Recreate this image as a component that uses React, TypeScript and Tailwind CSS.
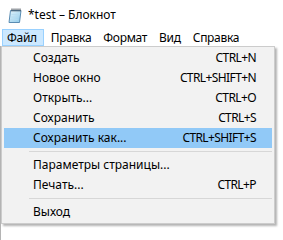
import React from 'react'

const font = { fontFamily: '"Noto Sans", "Open Sans", sans-serif' }

type Item = { label: string; keys?: string; active?: boolean } | 'sep'

const items: Item[] = [
  { label: 'Создать', keys: 'CTRL+N' },
  { label: 'Новое окно', keys: 'CTRL+SHIFT+N' },
  { label: 'Открыть...', keys: 'CTRL+O' },
  { label: 'Сохранить', keys: 'CTRL+S' },
  { label: 'Сохранить как...', keys: 'CTRL+SHIFT+S', active: true },
  'sep',
  { label: 'Параметры страницы...' },
  { label: 'Печать...', keys: 'CTRL+P' },
  'sep',
  { label: 'Выход' },
]

function NotepadIcon() {
  return (
    <svg width="16" height="16" viewBox="0 0 16 16">
      <defs>
        <linearGradient id="pg" x1="0" y1="0" x2="1" y2="1">
          <stop offset="0" stopColor="#e4f4fc" />
          <stop offset="1" stopColor="#8fcbea" />
        </linearGradient>
      </defs>
      <path d="M3.5 3.5 L14 3.5 L12.5 15.5 L2 15.5 Z" fill="url(#pg)" stroke="#5b8db3" strokeWidth="1" />
      <path d="M4.5 7.5 H11.5 M4 10 H11 M3.7 12.5 H10.7" stroke="#b7dcef" strokeWidth="0.8" />
      {[4.5, 6.5, 8.5, 10.5, 12.5].map((x) => (
        <rect key={x} x={x} y="1.5" width="1" height="3" fill="#3d4650" />
      ))}
    </svg>
  )
}

export default function App() {
  return (
    <div className="relative w-[283px] h-[240px] overflow-hidden bg-white text-black text-[12px] leading-none" style={font}>
      <div className="h-[29px] flex items-center pl-[7px] gap-[5px] pt-[1px]">
        <NotepadIcon />
        <span>*test – Блокнот</span>
      </div>

      <div className="h-[17px] flex items-stretch pl-[2px] tracking-[-0.3px]">
        <div className="pl-[4px] pr-[6px] flex items-center bg-[#cce8ff] border border-[#99d1ff]">Файл</div>
        <div className="pl-[7px] pr-[5px] flex items-center">Правка</div>
        <div className="pl-[7px] pr-[5px] flex items-center">Формат</div>
        <div className="pl-[7px] pr-[5px] flex items-center">Вид</div>
        <div className="pl-[7px] pr-[5px] flex items-center">Справка</div>
      </div>

      <div className="h-[194px] border-l border-[#b4b4b4]" />

      <div className="absolute left-[1px] top-[46px] w-[274px] bg-[#f2f2f2] border border-[#cccccc] px-[2px] py-[1px] shadow-[2px_2px_2px_rgba(0,0,0,0.3)]">
        {items.map((it, i) =>
          it === 'sep' ? (
            <div key={i} className="h-[7px] flex items-center pl-[25px]">
              <div className="h-px w-full bg-[#d7d7d7]" />
            </div>
          ) : (
            <div
              key={i}
              className={`h-[20px] flex items-center justify-between pl-[29px] pr-[16px] ${it.active ? 'bg-[#91c9f7]' : ''}`}
            >
              <span>{it.label}</span>
              {it.keys && <span className="tracking-[-0.6px]">{it.keys}</span>}
            </div>
          ),
        )}
      </div>
    </div>
  )
}
